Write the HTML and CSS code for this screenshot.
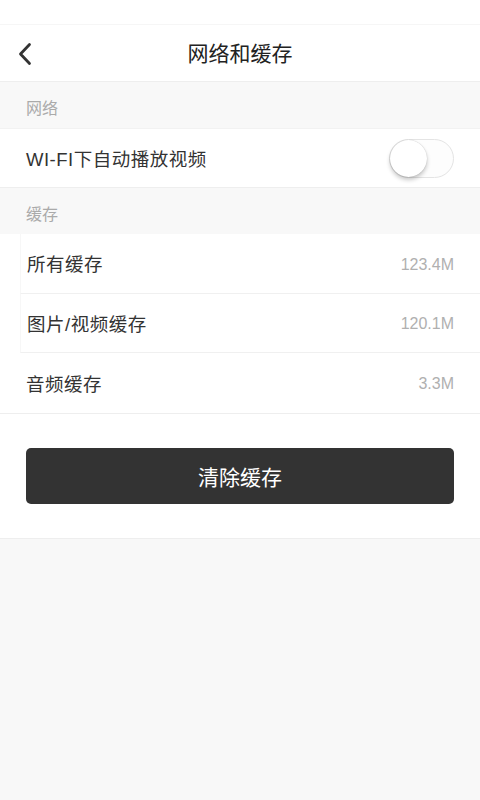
FILE: index.html
```html
<!DOCTYPE html>
<html lang="zh-CN">
<head>
<meta charset="utf-8">
<link rel="stylesheet" href="styles.css">
</head>
<body>
<div class="page">
  <div class="status"></div>
  <header class="nav">
    <span class="back">
      <svg width="16" height="24" viewBox="0 0 16 24"><path d="M12.5 2.5 L3.5 12 L12.5 21.5" fill="none" stroke="#333" stroke-width="2.8" stroke-linecap="round" stroke-linejoin="round"/></svg>
    </span>
    <h1 class="title">网络和缓存</h1>
  </header>
  <div class="section-title">网络</div>
  <div class="group">
    <div class="row switch-row">
      <span class="label">WI-FI下自动播放视频</span>
      <span class="switch"><span class="knob"></span></span>
    </div>
  </div>
  <div class="section-title">缓存</div>
  <div class="group inset">
    <div class="row"><span class="label">所有缓存</span><span class="value">123.4M</span></div>
    <div class="row"><span class="label">图片/视频缓存</span><span class="value">120.1M</span></div>
    <div class="row last"><span class="label">音频缓存</span><span class="value">3.3M</span></div>
  </div>
  <div class="action">
    <button class="btn">清除缓存</button>
  </div>
</div>
</body>
</html>
```
FILE: styles.css
```css
* { box-sizing: border-box; }
html, body { margin: 0; padding: 0; }
body {
  width: 480px;
  height: 800px;
  background: #f8f8f8;
  font-family: "Noto Sans CJK SC", "Noto Sans", sans-serif;
  color: #333;
  overflow: hidden;
}
.status { height: 25px; background: #fff; border-bottom: 1px solid #f6f6f6; }
.nav {
  height: 57px;
  background: #fff;
  border-bottom: 1px solid #eee;
  display: flex;
  align-items: center;
  justify-content: center;
  position: relative;
}
.back { position: absolute; left: 17px; top: 17px; display: flex; }
.title { margin: 0 0 2px; font-size: 21px; font-weight: 400; color: #222; line-height: 1; }
.section-title {
  height: 46px;
  padding-left: 26px;
  padding-top: 3px;
  display: flex;
  align-items: center;
  font-size: 16px;
  color: #aaa;
}
.group { background: #fff; border-top: 1px solid #f2f2f2; border-bottom: 1px solid #eee; }
.row {
  height: 59.5px;
  display: flex;
  align-items: center;
  justify-content: space-between;
  padding: 0 26px;
}
.switch-row { height: 58px; }
.inset .row {
  margin-left: 20px;
  padding-left: 6px;
  border-bottom: 1px solid #f0f0f0;
  border-left: 1px solid #f7f7f7;
}
.inset .row.last { border-bottom: none; border-left: none; }
.inset { border-top: none; }
.label {
  font-family: "Liberation Sans", "Noto Sans CJK SC", sans-serif;
  font-size: 18.5px;
  letter-spacing: 0.5px;
  color: #333;
}
.value { font-size: 16px; color: #b0b0b0; font-family: "Liberation Sans", "Noto Sans", sans-serif; margin-top: 3px; }
.switch {
  width: 65px;
  height: 39px;
  border-radius: 20px;
  border: 1.5px solid #e4e4e4;
  background: #fdfdfd;
  display: flex;
  align-items: center;
}
.knob {
  width: 37px;
  height: 37px;
  border-radius: 50%;
  background: #fff;
  box-shadow: 0 3px 4px rgba(0,0,0,0.22), 0 0 1px rgba(0,0,0,0.25);
}
.action {
  background: #fff;
  padding: 34px 26px 34px;
  border-bottom: 1px solid #eee;
}
.btn {
  display: block;
  width: 100%;
  height: 56px;
  border: none;
  border-radius: 5px;
  background: #333;
  color: #fff;
  font-family: "Noto Sans CJK SC", sans-serif;
  font-size: 21px;
}
```
